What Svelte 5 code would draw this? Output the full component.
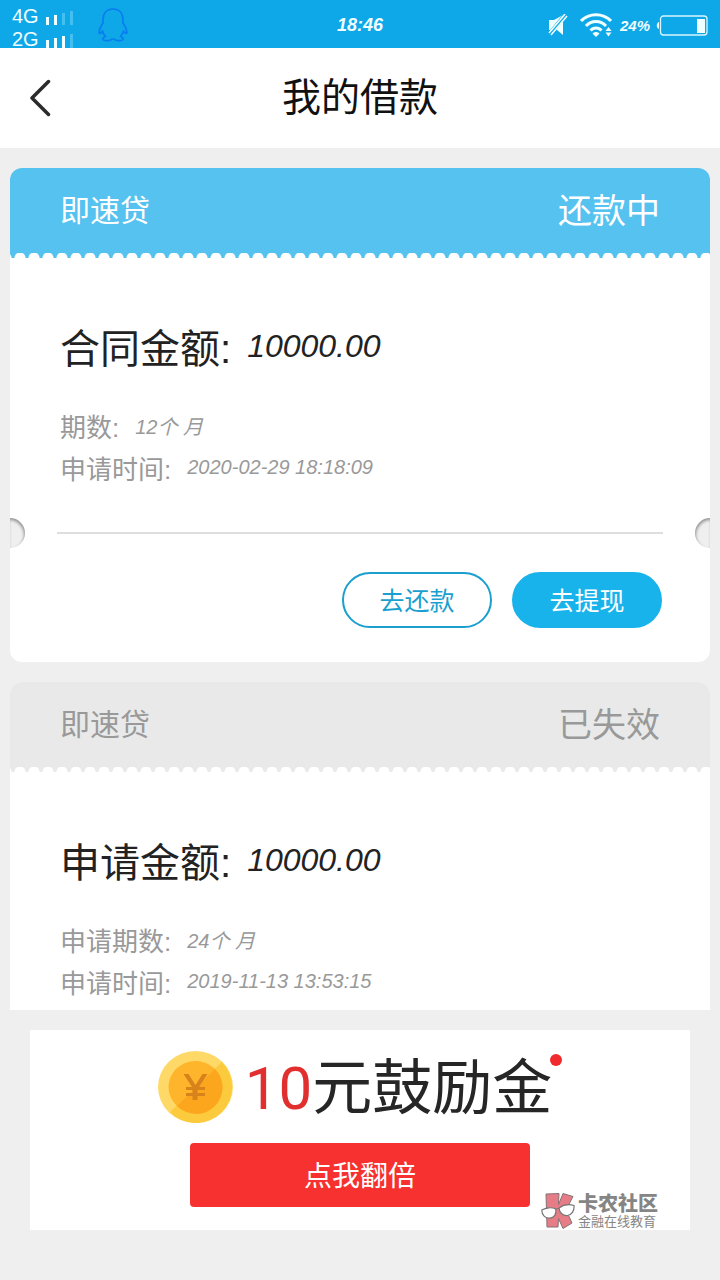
<script>
	const signals = [
		{ network: '4G', level: 2 },
		{ network: '2G', level: 3 }
	];

	const loans = [
		{
			product: '即速贷',
			status: '还款中',
			active: true,
			amountLabel: '合同金额:',
			amount: '10000.00',
			details: [
				{ label: '期数:', value: '12个 月' },
				{ label: '申请时间:', value: '2020-02-29 18:18:09' }
			]
		},
		{
			product: '即速贷',
			status: '已失效',
			active: false,
			amountLabel: '申请金额:',
			amount: '10000.00',
			details: [
				{ label: '申请期数:', value: '24个 月' },
				{ label: '申请时间:', value: '2019-11-13 13:53:15' }
			]
		}
	];
</script>

<div class="screen">
	<div class="status-bar">
		<div class="status-bar__left">
			<div class="signals">
				{#each signals as signal}
					<div class="signal">
						<span class="signal__network">{signal.network}</span>
						{#each [8, 10, 12, 14] as height, i}
							<i class="signal__bar" class:is-off={i >= signal.level} style:height={`${height}px`}></i>
						{/each}
					</div>
				{/each}
			</div>
			<svg width="30" height="34" viewBox="0 0 30 34" fill="none" stroke="#087df0" stroke-width="1.7" stroke-linejoin="round" aria-hidden="true">
				<path d="M15 1C8.500 1 5 5.500 5 12v3C3 18 .8 21.500 1.200 25c.3 1.300 2.300-.5 3.300-2 .5 2.300 1.500 4 3 5.500-2 .8-3 1.800-2.500 3 .8 1.700 7.500 1.500 9-.5h2c1.500 2 8.200 2.200 9 .5.500-1.200-.5-2.200-2.500-3 1.500-1.500 2.500-3.200 3-5.500 1 1.500 3 3.300 3.300 2 .4-3.500-1.800-7-3.800-10v-3C25 5.500 21.500 1 15 1Z" />
			</svg>
		</div>

		<time class="status-bar__time">18:46</time>

		<div class="status-bar__right">
			<svg width="20" height="22" viewBox="0 0 20 22" aria-hidden="true">
				<path d="M1 6h5l9-5v20l-6-5H1Z" fill="#f0ffff" />
				<path d="M18 0 2 20" stroke="#0ea7e7" stroke-width="4.500" />
				<path d="M17 0 1 19M19 2 3 21" stroke="#f0ffff" stroke-width="1.600" />
			</svg>
			<svg class="wifi" width="32" height="24" viewBox="0 0 32 24" aria-hidden="true">
				<g fill="none" stroke="#f0ffff" stroke-width="3">
					<path d="M1 8C9-.5 23-.5 31 8" />
					<path d="M6 13c5.500-6 14.500-6 20 0" />
					<path d="M10.500 17.500c3-3.500 8-3.500 11 0" />
				</g>
				<path d="M12.500 20.500c2-2 5-2 7 0L16 24ZM28.500 14l3 4h-6ZM25.500 19.500h6l-3 4Z" fill="#f0ffff" />
			</svg>
			<span class="battery-level">24%</span>
			<svg width="52" height="21" viewBox="0 0 52 21" aria-hidden="true">
				<rect x="4.500" y="1" width="46.500" height="19" rx="3" fill="none" stroke="#d8f6ff" stroke-width="1.300" />
				<path d="M3 7v7C0 13 0 8 3 7ZM41 4h8v14h-8Z" fill="#f0ffff" />
			</svg>
		</div>
	</div>

	<header class="nav">
		<button class="nav__back" type="button" aria-label="返回">
			<svg width="22" height="38" viewBox="0 0 22 38" fill="none" stroke="#2b2b2b" stroke-width="3.500" stroke-linecap="round" stroke-linejoin="round" aria-hidden="true">
				<path d="M18.500 2.500 2 19l16.500 16.500" />
			</svg>
		</button>
		<h1 class="nav__title">我的借款</h1>
	</header>

	<main class="loans">
		{#each loans as loan}
			<article class="loan" class:is-inactive={!loan.active}>
				<div class="loan__head">
					<h2 class="loan__product">{loan.product}</h2>
					<span class="loan__status">{loan.status}</span>
				</div>

				<div class="loan__body">
					<p class="loan__amount">
						<span>{loan.amountLabel}</span>
						<em>{loan.amount}</em>
					</p>
					{#each loan.details as detail}
						<p class="loan__detail">
							<span>{detail.label}</span>
							<em>{detail.value}</em>
						</p>
					{/each}
				</div>

				{#if loan.active}
					<div class="tear" aria-hidden="true">
						<i class="tear__notch"></i>
						<i class="tear__line"></i>
						<i class="tear__notch tear__notch--right"></i>
					</div>
					<div class="loan__actions">
						<button class="action" type="button">去还款</button>
						<button class="action action--filled" type="button">去提现</button>
					</div>
				{/if}
			</article>
		{/each}
	</main>

	<footer class="promo-area">
		<section class="promo">
			<div class="promo__headline">
				<svg width="75" height="72" viewBox="0 0 75 72" aria-hidden="true">
					<ellipse cx="37.500" cy="36" rx="37.500" ry="36" fill="#fed967" />
					<path d="M64 11a36 36 0 0 1-52 50Z" fill="#fccb3d" />
					<ellipse cx="37.500" cy="36" rx="27" ry="26" fill="#ffb52b" />
					<path d="M57 18a26 26 0 0 1-38 37Z" fill="#fca61e" />
					<path d="M25.500 23h5l7 11 7-11h5L41 36h6v3h-7.500v3H47v3h-7.500v4h-5v-4H28v-3h6.500v-3H28v-3h6Z" fill="#d7821b" />
				</svg>
				<p class="promo__text"><span>10</span>元鼓励金</p>
				<i class="promo__dot"></i>
			</div>
			<button class="promo__button" type="button">点我翻倍</button>

			<div class="watermark">
				<svg width="34" height="36" viewBox="0 0 34 36" aria-hidden="true">
					<path d="m5 1 13-.5-.5 11L22 .5l10 3L25 17l6 13-9 5.500-4.500-10-.5 8.500H6Z" fill="#e67c86" stroke="#877176" />
					<g fill="#fff" stroke="#757575" stroke-width="1.200">
						<path d="M.8 17c4-2.500 10-3 14-1 .8 5-1.500 9-6 9.200S.8 22 .8 17Z" />
						<path d="M18 15c4-3 10-4 15-2.500.5 5-2 9.500-6.500 10S18.500 20 18 15Z" />
					</g>
					<path d="M14.800 16.500q1.500-1.500 3.400-1" fill="none" stroke="#757575" />
				</svg>
				<div>
					<strong>卡农社区</strong>
					<small>金融在线教育</small>
				</div>
			</div>
		</section>
	</footer>
</div>

<style>
	:global(body) {
		background: #efefef;
	}

	.screen {
		height: 100vh;
		display: flex;
		flex-direction: column;
		background: #efefef;
		color: #222;
		font-family: 'Liberation Sans', 'Noto Sans CJK SC', sans-serif;
	}

	.screen button {
		padding: 0;
		font-family: inherit;
		cursor: pointer;
	}

	h1,
	h2,
	p {
		margin: 0;
		font-weight: 400;
	}

	svg {
		display: block;
		flex-shrink: 0;
	}

	.status-bar {
		flex-shrink: 0;
		height: 48px;
		display: grid;
		grid-template-columns: 1fr auto 1fr;
		align-items: center;
		box-sizing: border-box;
		padding: 0 12px 2px;
		background: #0ea7e7;
		color: #f0ffff;
	}

	.status-bar__left,
	.status-bar__right {
		display: flex;
		align-items: center;
	}

	.status-bar__left {
		gap: 25px;
	}

	.status-bar__right {
		justify-content: flex-end;
		gap: 6px;
	}

	.status-bar__time {
		font-size: 18px;
		font-style: italic;
		font-weight: 700;
	}

	.signals {
		padding-top: 4px;
	}

	.signal {
		display: flex;
		align-items: flex-end;
		gap: 5px;
		height: 23px;
	}

	.signal__network {
		width: 29px;
		font-size: 20px;
		line-height: 22px;
	}

	.signal__bar {
		width: 3px;
		margin-bottom: 2px;
		background: #f0ffff;
	}

	.signal__bar.is-off {
		background: #43bff0;
	}

	.wifi {
		margin: 0 2px 0 6px;
	}

	.battery-level {
		font-size: 15px;
		font-style: italic;
		font-weight: 700;
	}

	.nav {
		flex-shrink: 0;
		height: 100px;
		display: grid;
		grid-template-columns: 1fr auto 1fr;
		align-items: center;
		padding: 0 30px;
		background: #fff;
	}

	.nav__back {
		justify-self: start;
		border: 0;
		background: none;
	}

	.nav__title {
		font-size: 39px;
		line-height: 56px;
		color: #111;
	}

	.loans {
		flex: 1;
		min-height: 0;
		display: flex;
		flex-direction: column;
		gap: 20px;
		padding: 20px 10px 0;
		overflow-y: auto;
		scrollbar-width: none;
	}

	.loan {
		flex-shrink: 0;
		overflow: hidden;
		border-radius: 12px;
		background: #fff;
	}

	.loan.is-inactive {
		padding-bottom: 40px;
	}

	.loan__head {
		height: 90px;
		display: flex;
		align-items: center;
		justify-content: space-between;
		box-sizing: border-box;
		padding: 0 50px 4px;
		background:
			radial-gradient(circle at 7px 5px, #fff 5px, transparent 6px) 3px 100% / 14px 5px repeat-x,
			#56c2f0;
		color: #fff;
	}

	.is-inactive .loan__head {
		background-color: #e9e9e9;
		color: #999;
	}

	.loan__product {
		font-size: 30px;
		line-height: 44px;
	}

	.loan__status {
		font-size: 34px;
		line-height: 44px;
	}

	.loan__body {
		padding: 58px 50px 28px;
	}

	.loan__amount,
	.loan__detail {
		display: flex;
		align-items: center;
		gap: 16px;
	}

	.loan__amount {
		height: 60px;
		margin-bottom: 28px;
		font-size: 40px;
	}

	.loan__amount em {
		font-size: 32px;
	}

	.loan__detail {
		height: 42px;
		font-size: 26px;
		color: #999;
	}

	.loan__detail em {
		font-size: 20px;
	}

	.tear {
		display: flex;
		align-items: center;
		justify-content: space-between;
		padding-top: 2px;
	}

	.tear__line {
		flex: 1;
		height: 2px;
		margin: 0 32px;
		background: #dedede;
	}

	.tear__notch {
		width: 15px;
		height: 30px;
		border-radius: 0 15px 15px 0;
		background: #efefef;
		box-shadow: inset -1px 2px 3px #999;
	}

	.tear__notch--right {
		border-radius: 15px 0 0 15px;
		box-shadow: inset 1px 2px 3px #999;
	}

	.loan__actions {
		display: flex;
		justify-content: flex-end;
		gap: 20px;
		padding: 24px 48px 34px;
	}

	.action {
		width: 150px;
		height: 56px;
		border: 2px solid #1a9fcf;
		border-radius: 28px;
		background: #fff;
		color: #1a9fcf;
		font-size: 25px;
	}

	.action--filled {
		border-color: #19b3eb;
		background: #19b3eb;
		color: #fff;
	}

	.promo-area {
		flex-shrink: 0;
		padding: 20px 30px 50px;
	}

	.promo {
		position: relative;
		display: flex;
		flex-direction: column;
		align-items: center;
		gap: 20px;
		padding: 21px 20px 23px;
		background: #fff;
	}

	.promo__headline {
		display: flex;
		align-items: center;
		gap: 12px;
		height: 72px;
	}

	.promo__text {
		padding-top: 4px;
		color: #262626;
		font-family: Roboto, 'Noto Sans CJK SC', sans-serif;
		font-size: 60px;
		line-height: 72px;
		white-space: nowrap;
	}

	.promo__text span {
		color: #e12f2f;
	}

	.promo__dot {
		align-self: flex-start;
		width: 12px;
		height: 12px;
		margin: 3px 0 0 -14px;
		border-radius: 50%;
		background: #f02a2d;
	}

	.promo__button {
		width: 340px;
		height: 64px;
		border: 0;
		border-radius: 4px;
		background: #f7312f;
		color: #fff;
		font-size: 28px;
	}

	.screen .action,
	.screen .promo__button {
		padding-bottom: 3px;
	}

	.watermark {
		position: absolute;
		right: 32px;
		bottom: 1px;
		display: flex;
		align-items: center;
		gap: 3px;
		color: #858585;
	}

	.watermark strong,
	.watermark small {
		display: block;
	}

	.watermark strong {
		font-size: 20px;
		font-weight: 900;
		line-height: 22px;
	}

	.watermark small {
		font-size: 13px;
		line-height: 14px;
	}
</style>
